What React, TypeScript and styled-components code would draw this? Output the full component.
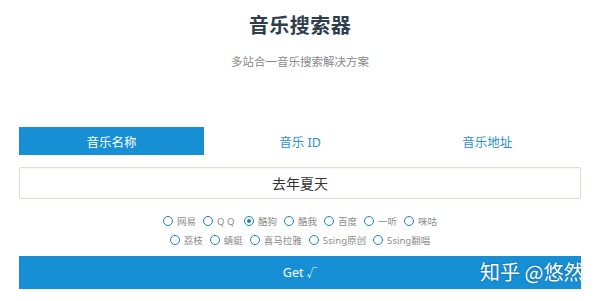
import React, { useState } from "react";
import styled, { createGlobalStyle } from "styled-components";

const Global = createGlobalStyle`
  html, body { margin: 0; padding: 0; background: #fff; }
  body { font-family: "Noto Sans", "Noto Sans CJK SC", sans-serif; }
  * { box-sizing: border-box; }
`;

const Page = styled.div`
  position: relative;
  width: 600px;
  height: 301px;
  overflow: hidden;
  background: #fff;
`;

const Header = styled.header`
  height: 112px;
  display: flex;
  flex-direction: column;
  align-items: center;
  padding-top: 11px;
`;

const Title = styled.h1`
  margin: 0;
  font-family: "Noto Sans CJK SC", sans-serif;
  font-size: 20px;
  line-height: 28px;
  font-weight: 700;
  color: #2f3e4e;
  letter-spacing: 0.5px;
`;

const Subtitle = styled.p`
  margin: 14px 0 0;
  font-family: "Noto Sans CJK SC", sans-serif;
  font-size: 11.5px;
  line-height: 16px;
  color: #8a8a8a;
`;

const Main = styled.main`
  padding: 15px 19px 0;
  display: flex;
  flex-direction: column;
`;

const Tabs = styled.div`
  display: grid;
  grid-template-columns: repeat(3, 1fr);
  height: 28px;
`;

const Tab = styled.button<{ $active?: boolean }>`
  border: none;
  margin: 0;
  padding: 0;
  font-family: "Noto Sans", "Noto Sans CJK SC", sans-serif;
  font-size: 12.5px;
  background: ${(p) => (p.$active ? "#168fd4" : "transparent")};
  color: ${(p) => (p.$active ? "#fff" : "#2a8fcf")};
  cursor: pointer;
  width: ${(p) => (p.$active ? "185px" : "auto")};
`;

const Input = styled.input`
  margin-top: 12px;
  height: 32px;
  width: 100%;
  border: 1px solid #d6e2d4;
  border-radius: 2px;
  text-align: center;
  font-family: "Noto Sans CJK SC", sans-serif;
  font-size: 14px;
  color: #333;
  outline: none;
  box-shadow: inset 0 1px 1px rgba(0, 0, 0, 0.04);
`;

const Sources = styled.div`
  margin-top: 13px;
  display: flex;
  flex-direction: column;
  align-items: center;
  gap: 1px;
`;

const SourceRow = styled.div`
  display: flex;
  gap: 7px;
  height: 18px;
  align-items: center;
`;

const Option = styled.label`
  display: flex;
  align-items: center;
  gap: 4px;
  font-family: "Noto Sans", "Noto Sans CJK SC", sans-serif;
  font-size: 9.5px;
  color: #8c8c8c;
  cursor: pointer;
`;

const Dot = styled.span<{ $checked?: boolean }>`
  position: relative;
  width: 10px;
  height: 10px;
  border: 1.6px solid #1d7fbd;
  border-radius: 50%;
  &::after {
    content: "";
    display: ${(p) => (p.$checked ? "block" : "none")};
    position: absolute;
    left: 50%;
    top: 50%;
    width: 4px;
    height: 4px;
    margin: -2px 0 0 -2px;
    border-radius: 50%;
    background: #1d7fbd;
  }
`;

const Spaced = styled.span`
  letter-spacing: 2.5px;
`;

const GetButton = styled.button`
  margin-top: 7px;
  height: 33px;
  width: 100%;
  border: none;
  background: #168fd4;
  color: #fff;
  font-family: "Noto Sans", "Noto Sans CJK SC", sans-serif;
  font-size: 12.5px;
  cursor: pointer;
`;

const Check = styled.span`
  font-size: 10.5px;
`;

const Watermark = styled.div`
  position: absolute;
  left: 480px;
  top: 259px;
  font-family: "Noto Sans CJK SC", sans-serif;
  font-size: 20px;
  line-height: 26px;
  color: #fff;
  white-space: nowrap;
  text-shadow: 0 0 2px rgba(0, 0, 0, 0.35);
`;

const row1 = ["网易", "QQ", "酷狗", "酷我", "百度", "一听", "咪咕"];
const row2 = ["荔枝", "蜻蜓", "喜马拉雅", "5sing原创", "5sing翻唱"];

export default function App() {
  const [tab, setTab] = useState(0);
  const [src, setSrc] = useState("酷狗");
  const tabs = ["音乐名称", "音乐 ID", "音乐地址"];
  const renderOpt = (name: string) => (
    <Option key={name} onClick={() => setSrc(name)}>
      <Dot $checked={src === name} />
      {name === "QQ" ? <Spaced>QQ</Spaced> : name}
    </Option>
  );
  return (
    <Page>
      <Global />
      <Header>
        <Title>音乐搜索器</Title>
        <Subtitle>多站合一音乐搜索解决方案</Subtitle>
      </Header>
      <Main>
        <Tabs>
          {tabs.map((t, i) => (
            <Tab key={t} $active={tab === i} onClick={() => setTab(i)}>
              {t}
            </Tab>
          ))}
        </Tabs>
        <Input defaultValue="去年夏天" />
        <Sources>
          <SourceRow>{row1.map(renderOpt)}</SourceRow>
          <SourceRow>{row2.map(renderOpt)}</SourceRow>
        </Sources>
        <GetButton>
          Get <Check>√</Check>
        </GetButton>
      </Main>
      <Watermark>知乎 @悠然</Watermark>
    </Page>
  );
}
